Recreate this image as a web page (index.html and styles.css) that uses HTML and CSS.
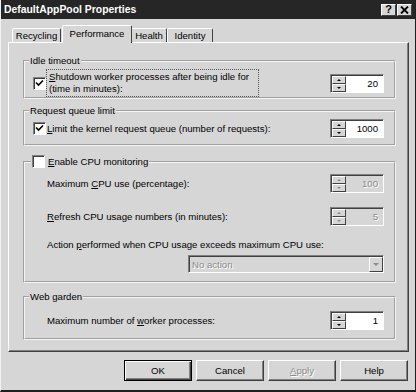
FILE: index.html
```html
<!DOCTYPE html>
<html lang="en">
<head>
  <meta charset="UTF-8">
  <title>DefaultAppPool Properties</title>
  <link rel="stylesheet" href="styles.css">
</head>
<body>
  <div class="window">
    <div class="titlebar">
      <span class="title">DefaultAppPool Properties</span>
      <div class="caps">
        <span class="cap-btn">?</span>
        <span class="cap-btn">
          <svg width="9" height="8" viewBox="0 0 9 8"><path d="M1 0.5 L8 7.5 M8 0.5 L1 7.5" stroke="#000" stroke-width="1.8"/></svg>
        </span>
      </div>
    </div>

    <div class="tabs">
      <div class="tab tab-recycling">Recycling</div>
      <div class="tab tab-perf active">Performance</div>
      <div class="tab tab-health">Health</div>
      <div class="tab tab-identity">Identity</div>
    </div>

    <div class="panel">
      <!-- idle timeout -->
      <fieldset class="group group-idle">
        <legend>Idle timeout</legend>
        <div class="row">
          <div class="check">
            <span class="box checked"></span>
            <span class="focus"><u>S</u>hutdown worker processes after being idle for<br>(time in minutes):</span>
          </div>
          <div class="spinner">
            <div class="spin"><span class="up"></span><span class="down"></span></div>
            <div class="field">20</div>
          </div>
        </div>
      </fieldset>

      <!-- request queue -->
      <fieldset class="group group-queue">
        <legend>Request queue limit</legend>
        <div class="row">
          <div class="check">
            <span class="box checked"></span>
            <span class="label"><u>L</u>imit the kernel request queue (number of requests):</span>
          </div>
          <div class="spinner">
            <div class="spin"><span class="up"></span><span class="down"></span></div>
            <div class="field">1000</div>
          </div>
        </div>
      </fieldset>

      <!-- cpu monitoring -->
      <fieldset class="group group-cpu">
        <legend class="check-legend"><span class="box"></span><span><u>E</u>nable CPU monitoring</span></legend>
        <div class="row row-cpu">
          <span class="label">Maximum <u>C</u>PU use (percentage):</span>
          <div class="spinner disabled">
            <div class="spin"><span class="up"></span><span class="down"></span></div>
            <div class="field">100</div>
          </div>
        </div>
        <div class="row row-cpu">
          <span class="label"><u>R</u>efresh CPU usage numbers (in minutes):</span>
          <div class="spinner disabled">
            <div class="spin"><span class="up"></span><span class="down"></span></div>
            <div class="field">5</div>
          </div>
        </div>
        <div class="action-label">Action <u>p</u>erformed when CPU usage exceeds maximum CPU use:</div>
        <div class="select-row">
          <div class="select disabled">
            <span class="select-text">No action</span>
            <span class="select-btn"><span class="arrow"></span></span>
          </div>
        </div>
      </fieldset>

      <!-- web garden -->
      <fieldset class="group group-web">
        <legend>Web garden</legend>
        <div class="row row-web">
          <span class="label">Maximum number of <u>w</u>orker processes:</span>
          <div class="spinner">
            <div class="spin"><span class="up"></span><span class="down"></span></div>
            <div class="field">1</div>
          </div>
        </div>
      </fieldset>
    </div>

    <div class="buttons">
      <button class="btn default">OK</button>
      <button class="btn">Cancel</button>
      <button class="btn" disabled><u>A</u>pply</button>
      <button class="btn">Help</button>
    </div>
  </div>
</body>
</html>
```

FILE: styles.css
```css
* {
  box-sizing: border-box;
}
body {
  margin: 0;
  font-family: "Liberation Sans", Arial, sans-serif;
  font-size: 9.6px;
  color: #000;
  background: #d6d6d6;
}
.window {
  width: 416px;
  height: 392px;
  background: #d6d6d6;
  border-left: 1px solid #f2f2f2;
  border-right: 1px solid #1e1e1e;
  border-bottom: 2px solid #1e1e1e;
  display: flex;
  flex-direction: column;
}
.titlebar {
  height: 19px;
  background: #262626;
  display: flex;
  align-items: center;
  justify-content: space-between;
  padding: 0 3px 0 3px;
}
.title {
  color: #fff;
  font-weight: bold;
  font-size: 10.4px;
}
.caps {
  display: flex;
  gap: 1px;
}
.cap-btn {
  width: 15px;
  height: 12px;
  background: #d6d6d6;
  border: 1px solid;
  border-color: #fff #404040 #404040 #fff;
  display: flex;
  align-items: center;
  justify-content: center;
  font-weight: bold;
  font-size: 11px;
  line-height: 1;
}

/* tabs */
.tabs {
  display: flex;
  align-items: flex-end;
  height: 23px;
  padding-left: 11px;
}
.tab {
  height: 14px;
  padding: 0 4px;
  display: flex;
  align-items: center;
  justify-content: center;
  background: #d6d6d6;
  border: 1px solid;
  border-bottom: none;
  border-color: #fff #404040 transparent #fff;
  border-radius: 2px 2px 0 0;
}
.tab-recycling { width: 49px; }
.tab-health { width: 36px; }
.tab-identity { width: 46px; }
.tab.active {
  width: 70px;
  margin: 0 -1px -1px 1px;
  padding-bottom: 2px;
  position: relative;
  z-index: 1;
  height: 18px;
}

/* tab panel */
.panel {
  height: 310px;
  margin: 0 6px 0 7px;
  border: 1px solid;
  border-color: #fff #404040 #404040 #fff;
  box-shadow: inset -1px -1px 0 #808080;
  padding: 12px 12px 0 14px;
  display: flex;
  flex-direction: column;
}
.group {
  margin: 0;
  border: 2px groove #f4f4f4;
  padding: 0 10px 0 3px;
  min-width: 0;
}
.group legend {
  padding: 0 1px;
  margin-left: 1px;
  line-height: 12px;
}
.group-queue { margin-top: 6px; }
.group-cpu { margin-top: 9px; }
.group-web { margin-top: 8px; }
.row {
  display: flex;
  align-items: center;
  justify-content: space-between;
  white-space: nowrap;
}
.group-idle .row {
  padding: 2px 0 0 5px;
}
.group-queue .row {
  padding: 2px 0 6px 5px;
}
.check {
  display: flex;
  align-items: center;
}
.box {
  width: 13px;
  height: 13px;
  background: #fff;
  border: 1px solid;
  border-color: #808080 #fff #fff #808080;
  box-shadow: inset 1px 1px 0 #404040;
  flex: none;
}
.box.checked {
  background: #fff url("data:image/svg+xml;utf8,<svg xmlns='http://www.w3.org/2000/svg' width='11' height='11'><path d='M2 4.5 L4.5 7 L9 2.5' fill='none' stroke='black' stroke-width='1.6'/></svg>") no-repeat 0 0;
}
.focus {
  padding: 1px 2px;
  border: 1px dotted #555;
  line-height: 12px;
  width: 213px;
}
.check .label {
  margin-left: 1px;
}

/* spinner: arrows on the left, value on the right */
.spinner {
  display: flex;
  width: 54px;
  height: 19px;
  border: 1px solid;
  border-color: #808080 #fff #fff #808080;
  box-shadow: inset 1px 1px 0 #404040;
  padding: 1px 0 0 1px;
  background: #fff;
}
.spin {
  width: 14px;
  display: flex;
  flex-direction: column;
}
.spin span {
  flex: 1;
  background: #d6d6d6;
  border: 1px solid;
  border-color: #fff #404040 #404040 #fff;
  display: flex;
  align-items: center;
  justify-content: center;
}
.spin span::after {
  content: "";
  border-left: 2px solid transparent;
  border-right: 2px solid transparent;
}
.spin .up::after {
  border-bottom: 2px solid #000;
}
.spin .down::after {
  border-top: 2px solid #000;
}
.field {
  flex: 1;
  text-align: right;
  padding-right: 5px;
  line-height: 16px;
}
.spinner.disabled {
  background: #d6d6d6;
}
.spinner.disabled .field {
  color: #8c8c8c;
  text-shadow: 1px 1px 0 #fff;
}
.spinner.disabled .spin .up::after {
  border-bottom-color: #8c8c8c;
}
.spinner.disabled .spin .down::after {
  border-top-color: #8c8c8c;
}

/* cpu group */
.group .check-legend {
  display: flex;
  align-items: center;
  gap: 3px;
  margin-left: 3px;
}
.group-cpu {
  padding-bottom: 8px;
}
.row-cpu {
  height: 19px;
  margin-top: 6px;
  padding-left: 19px;
}
.row-cpu + .row-cpu {
  margin-top: 14px;
}
.action-label {
  margin-top: 13px;
  padding-left: 19px;
}
.select-row {
  display: flex;
  justify-content: flex-end;
  margin-top: 5px;
}
.select {
  width: 196px;
  height: 18px;
  display: flex;
  border: 1px solid;
  border-color: #808080 #fff #fff #808080;
  box-shadow: inset 1px 1px 0 #404040;
  padding: 1px 0 0 1px;
  background: #d6d6d6;
}
.select-text {
  flex: 1;
  padding-left: 2px;
  line-height: 15px;
  color: #8c8c8c;
  text-shadow: 1px 1px 0 #fff;
}
.select-btn {
  width: 14px;
  border: 1px solid;
  border-color: #fff #404040 #404040 #fff;
  display: flex;
  align-items: center;
  justify-content: center;
}
.arrow {
  border-left: 3px solid transparent;
  border-right: 3px solid transparent;
  border-top: 3px solid #8c8c8c;
}

/* web garden */
.row-web {
  padding: 8px 0 8px 19px;
}

/* bottom buttons */
.buttons {
  display: flex;
  justify-content: flex-end;
  gap: 4px;
  padding: 8px 7px 0 0;
}
.btn {
  width: 68px;
  height: 21px;
  font-family: "Liberation Sans", Arial, sans-serif;
  font-size: 9.6px;
  background: #d6d6d6;
  border: 1px solid;
  border-color: #fff #404040 #404040 #fff;
  box-shadow: inset -1px -1px 0 #808080;
  padding: 0;
  color: #000;
}
.btn.default {
  border-color: #000;
  box-shadow: inset 1px 1px 0 #fff, inset -1px -1px 0 #404040, inset -2px -2px 0 #808080;
}
.btn:disabled {
  color: #8c8c8c;
  text-shadow: 1px 1px 0 #fff;
}
```
